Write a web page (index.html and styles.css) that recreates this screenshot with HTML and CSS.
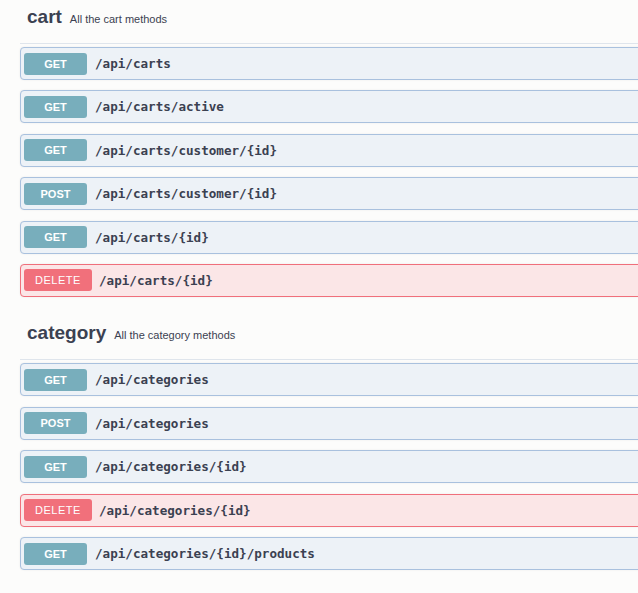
FILE: index.html
```html
<!DOCTYPE html>
<html>
<head>
<meta charset="utf-8">
<link rel="stylesheet" href="styles.css">
</head>
<body>
<div class="wrap">
  <section class="tag">
    <div class="tag-head"><span class="tag-name">cart</span><span class="tag-desc">All the cart methods</span></div>
    <div class="ops">
      <div class="op get"><span class="method">GET</span><span class="path">/api/carts</span></div>
      <div class="op get"><span class="method">GET</span><span class="path">/api/carts/active</span></div>
      <div class="op get"><span class="method">GET</span><span class="path">/api/carts/customer/{id}</span></div>
      <div class="op post"><span class="method">POST</span><span class="path">/api/carts/customer/{id}</span></div>
      <div class="op get"><span class="method">GET</span><span class="path">/api/carts/{id}</span></div>
      <div class="op delete"><span class="method">DELETE</span><span class="path">/api/carts/{id}</span></div>
    </div>
  </section>
  <section class="tag">
    <div class="tag-head"><span class="tag-name">category</span><span class="tag-desc">All the category methods</span></div>
    <div class="ops">
      <div class="op get"><span class="method">GET</span><span class="path">/api/categories</span></div>
      <div class="op post"><span class="method">POST</span><span class="path">/api/categories</span></div>
      <div class="op get"><span class="method">GET</span><span class="path">/api/categories/{id}</span></div>
      <div class="op delete"><span class="method">DELETE</span><span class="path">/api/categories/{id}</span></div>
      <div class="op get"><span class="method">GET</span><span class="path">/api/categories/{id}/products</span></div>
    </div>
  </section>
</div>
</body>
</html>
```

FILE: styles.css
```css
html, body {
  margin: 0;
  padding: 0;
  background: #fcfcfb;
  overflow: hidden;
}
body {
  font-family: "Liberation Sans", Arial, sans-serif;
  color: #3b4151;
}
.wrap {
  box-sizing: border-box;
  width: 638px;
  padding-left: 20px;
  overflow: hidden;
}
.tag {
  width: 640px;
  margin-bottom: 19.5px;
}
.tag-head {
  box-sizing: border-box;
  height: 44px;
  padding: 6px 0 0 7px;
  border-bottom: 1px solid #dfe5ec;
  display: flex;
  align-items: baseline;
  gap: 8px;
}
.tag-name {
  font-size: 19px;
  line-height: 22px;
  font-weight: bold;
  color: #3b4151;
}
.tag-desc {
  font-size: 11px;
  color: #3b4151;
}
.ops {
  padding-top: 3px;
  display: flex;
  flex-direction: column;
  gap: 10.4px;
}
.op {
  box-sizing: border-box;
  height: 33px;
  border: 1px solid #a9c1de;
  border-radius: 4px;
  background: #edf2f7;
  display: flex;
  align-items: center;
  padding-left: 3px;
  gap: 8px;
  box-shadow: 0 0 2px rgba(0,0,0,0.08);
}
.method {
  box-sizing: border-box;
  width: 63px;
  height: 22px;
  border-radius: 3px;
  background: #78aebc;
  color: #fff;
  font-size: 11px;
  font-weight: bold;
  display: flex;
  align-items: center;
  justify-content: center;
}
.path {
  font-family: "DejaVu Sans Mono", monospace;
  font-weight: bold;
  font-size: 12.6px;
  color: #3b4151;
}
.op.delete {
  border-color: #f06f7b;
  background: #fbe6e7;
}
.op.delete .method {
  width: 68px;
  background: #f1707b;
  font-weight: normal;
  letter-spacing: 0.5px;
}
.op.delete .path {
  margin-left: -1px;
}
```
